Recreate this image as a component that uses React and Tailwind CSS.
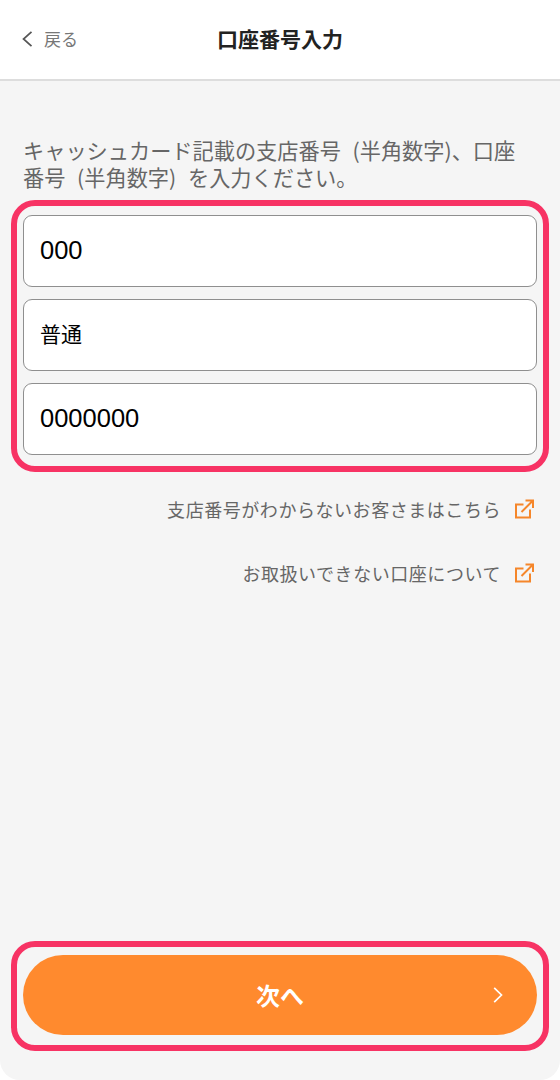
function Field({ children, className }) {
  return (
    <div className={`h-[72px] flex items-center px-[16px] pb-[2px] bg-white border-[1.5px] border-[#8f8f8f] rounded-[9px] text-black ${className}`}>
      {children}
    </div>
  )
}

function ExternalIcon() {
  return (
    <svg width="19" height="20" viewBox="0 0 19 20" fill="none" stroke="#f5862a" strokeWidth="2" className="shrink-0">
      <path d="M8.5 5.5H1V18.5H15V10.5" />
      <path d="M6.5 13L17 2.5M10.5 1.5H18V9" />
    </svg>
  )
}

function HelpLink({ children }) {
  return (
    <div className="flex items-center justify-end gap-[14px] pr-[3px] text-[18px] tracking-[0.55px] text-[#666666] h-[26px]">
      <span>{children}</span>
      <ExternalIcon />
    </div>
  )
}

export default function App() {
  return (
    <div className="w-[560px] h-[1080px] bg-white font-['Noto_Sans_CJK_JP','Noto_Sans',sans-serif]">
      <div className="h-full flex flex-col bg-[#f5f5f5] rounded-b-[20px] overflow-hidden">
        {/* Header */}
        <header className="relative h-[81px] shrink-0 bg-white border-b-2 border-[#dddddd] flex items-center justify-center pb-[2px]">
          <div className="absolute left-[22px] top-[26px] flex items-center gap-[11px] text-[#777777] text-[17px]">
            <svg width="11" height="16" viewBox="0 0 11 16" fill="none" stroke="#555555" strokeWidth="1.7">
              <path d="M9.5 0.8L1.5 8L9.5 15.2" />
            </svg>
            <span>戻る</span>
          </div>
          <h1 className="text-[21px] font-bold text-[#222222]">口座番号入力</h1>
        </header>

        <main className="flex-1 flex flex-col px-[11px] pt-[55px] pb-[29px]">
          <p className="pl-[12px] pr-[14px] text-[21.2px] leading-[27px] text-[#666666] [word-spacing:7px]">
            キャッシュカード記載の支店番号 (半角数字)、口座番号 (半角数字) を入力ください。
          </p>

          <div className="mt-[10px] border-[6px] border-[#f73364] rounded-[24px] px-[6px] pt-[9px] pb-[11px] flex flex-col gap-[12px]">
            <Field className="font-['Liberation_Sans','Noto_Sans_CJK_JP',sans-serif] text-[25.5px]">000</Field>
            <Field className="text-[21px]">普通</Field>
            <Field className="font-['Liberation_Sans','Noto_Sans_CJK_JP',sans-serif] text-[25.5px]">0000000</Field>
          </div>

          <div className="mt-[24px] flex flex-col gap-[38px] px-[12px]">
            <HelpLink>支店番号がわからないお客さまはこちら</HelpLink>
            <HelpLink>お取扱いできない口座について</HelpLink>
          </div>

          <div className="mt-auto border-[6px] border-[#f73364] rounded-[24px] px-[6px] pt-[8px] pb-[10px]">
            <button className="relative w-full h-[80px] rounded-[40px] bg-[#ff8a2e] text-white text-[24px] font-bold flex items-center justify-center">
              次へ
              <svg width="10" height="16" viewBox="0 0 10 16" fill="none" stroke="#ffffff" strokeWidth="1.7" className="absolute right-[34px] top-[32px]">
                <path d="M1.2 0.8L8.5 8L1.2 15.2" />
              </svg>
            </button>
          </div>
        </main>
      </div>
    </div>
  )
}
